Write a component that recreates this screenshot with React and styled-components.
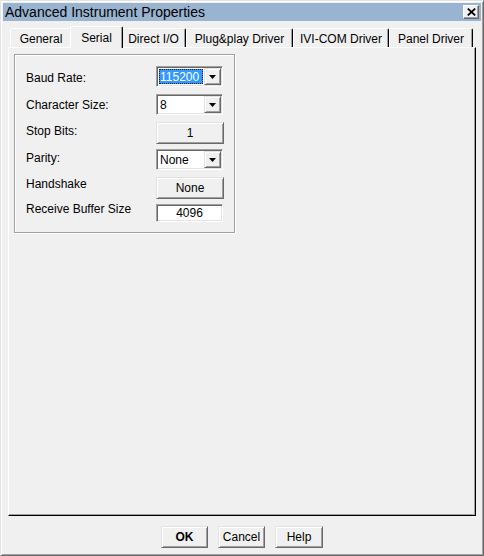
import React from 'react';
import styled, { createGlobalStyle } from 'styled-components';

const Global = createGlobalStyle`
  html, body { margin: 0; padding: 0; background: #f0f0f0; }
  body { font-family: "Liberation Sans", Arial, sans-serif; font-size: 12px; color: #000; }
  * { box-sizing: border-box; }
`;

const Window = styled.div`
  width: 484px;
  height: 556px;
  background: #f0f0f0;
  border: 1px solid;
  border-color: #e3e3e3 #696969 #696969 #e3e3e3;
  box-shadow: inset 1px 1px 0 #ffffff, inset -1px -1px 0 #a0a0a0;
  padding: 2px 2px 0 2px;
  display: flex;
  flex-direction: column;
`;

const TitleBar = styled.div`
  height: 18px;
  flex: none;
  background: #99b4d1;
  display: flex;
  align-items: center;
  justify-content: space-between;
  padding: 0 2px 0 2px;
`;

const TitleText = styled.span`
  font-size: 14px;
  line-height: 18px;
  color: #000;
`;

const CloseButton = styled.div`
  width: 16px;
  height: 14px;
  background: #f0f0f0;
  border: 1px solid;
  border-color: #ffffff #696969 #696969 #ffffff;
  box-shadow: inset -1px -1px 0 #a0a0a0;
  display: flex;
  align-items: center;
  justify-content: center;
`;

const Body = styled.div`
  padding: 0 5px;
  display: flex;
  flex-direction: column;
`;

const TabStrip = styled.div`
  margin-top: 5px;
  height: 21px;
  display: flex;
  align-items: flex-end;
  padding-left: 2px;
`;

const Tab = styled.div`
  width: ${p => p.$w}px;
  height: ${p => (p.$active ? 22 : 19)}px;
  margin: ${p => (p.$active ? '0 -2px -1px -2px' : '0')};
  z-index: ${p => (p.$active ? 1 : 0)};
  padding-top: ${p => (p.$active ? 4 : 3)}px;
  background: #f0f0f0;
  border-style: solid;
  border-width: 1px 1px 0 1px;
  border-color: #ffffff #000000 transparent #ffffff;
  border-radius: 2px 2px 0 0;
  box-shadow: inset -1px 0 0 #a0a0a0;
  text-align: center;
  font-size: 12px;
  line-height: 14px;
  white-space: nowrap;
`;

const Panel = styled.div`
  height: 469px;
  border: 1px solid;
  border-color: #ffffff #000000 #000000 #ffffff;
  box-shadow: inset -1px -1px 0 #a0a0a0;
  padding: 6px 5px;
`;

const Group = styled.div`
  width: 221px;
  height: 179px;
  border: 1px solid #a0a0a0;
  box-shadow: inset 1px 1px 0 #ffffff, 1px 1px 0 #ffffff;
  padding: 11px 0 0 11px;
  display: flex;
  flex-direction: column;
`;

const Row = styled.div`
  height: ${p => p.$h}px;
  display: grid;
  grid-template-columns: 130px auto;
  align-items: start;
`;

const Label = styled.div`
  font-size: 12px;
  line-height: 14px;
  margin-top: ${p => p.$dy}px;
  white-space: nowrap;
`;

const Combo = styled.div`
  width: 67px;
  height: 21px;
  background: #ffffff;
  border: 1px solid;
  border-color: #a0a0a0 #ffffff #ffffff #a0a0a0;
  box-shadow: inset 1px 1px 0 #696969, inset -1px -1px 0 #e3e3e3;
  padding: 1px;
  display: flex;
`;

const ComboValue = styled.div`
  flex: 1;
  display: flex;
  align-items: stretch;
  padding: 1px;
`;

const ValueText = styled.span`
  display: flex;
  align-items: center;
  font-size: 12px;
  line-height: 14px;
  padding: 0 1px;
  background: ${p => (p.$selected ? '#3399ff' : 'transparent')};
  color: ${p => (p.$selected ? '#ffffff' : '#000000')};
  outline: ${p => (p.$selected ? '1px dotted #202020' : 'none')};
  outline-offset: -1px;
  ${p => (p.$selected ? 'flex: 1;' : '')}
`;

const ArrowButton = styled.div`
  width: 17px;
  flex: none;
  background: #f0f0f0;
  border: 1px solid;
  border-color: #e3e3e3 #696969 #696969 #e3e3e3;
  box-shadow: inset 1px 1px 0 #ffffff, inset -1px -1px 0 #a0a0a0;
  display: flex;
  align-items: center;
  justify-content: center;
`;

const PushButton = styled.button`
  width: ${p => p.$w}px;
  height: 22px;
  margin-top: ${p => p.$dy || 0}px;
  padding: 0;
  font-family: "Liberation Sans", Arial, sans-serif;
  font-size: 12px;
  font-weight: ${p => (p.$bold ? 700 : 400)};
  color: #000;
  background: #f0f0f0;
  border: 1px solid;
  border-color: #e3e3e3 #696969 #696969 #e3e3e3;
  box-shadow: inset 1px 1px 0 #ffffff, inset -1px -1px 0 #a0a0a0;
`;

const Edit = styled.div`
  width: 67px;
  height: 18px;
  margin-top: ${p => p.$dy || 0}px;
  background: #ffffff;
  border: 1px solid;
  border-color: #a0a0a0 #ffffff #ffffff #a0a0a0;
  box-shadow: inset 1px 1px 0 #696969, inset -1px -1px 0 #e3e3e3;
  font-size: 12px;
  line-height: 16px;
  text-align: center;
`;

const ButtonRow = styled.div`
  margin-top: 10px;
  display: flex;
  justify-content: center;
  gap: 10px;
`;

const Arrow = () => (
  <svg width="7" height="4" viewBox="0 0 7 4">
    <polygon points="0,0 7,0 3.5,4" fill="#000" />
  </svg>
);

const CloseX = () => (
  <svg width="9" height="8" viewBox="0 0 9 8">
    <path d="M0.8 0.6 L8.2 7.4 M8.2 0.6 L0.8 7.4" stroke="#000" strokeWidth="1.8" />
  </svg>
);

const ComboBox = ({ value, selected }) => (
  <Combo>
    <ComboValue>
      <ValueText $selected={selected}>{value}</ValueText>
    </ComboValue>
    <ArrowButton>
      <Arrow />
    </ArrowButton>
  </Combo>
);

const tabs = [
  { label: 'General', w: 62 },
  { label: 'Serial', w: 53, active: true },
  { label: 'Direct I/O', w: 65 },
  { label: 'Plug&play Driver', w: 107 },
  { label: 'IVI-COM Driver', w: 96 },
  { label: 'Panel Driver', w: 84 },
];

export default function App() {
  return (
    <>
      <Global />
      <Window>
        <TitleBar>
          <TitleText>Advanced Instrument Properties</TitleText>
          <CloseButton>
            <CloseX />
          </CloseButton>
        </TitleBar>
        <Body>
          <TabStrip>
            {tabs.map(t => (
              <Tab key={t.label} $w={t.w} $active={t.active}>
                {t.label}
              </Tab>
            ))}
          </TabStrip>
          <Panel>
            <Group>
              <Row $h={28}>
                <Label $dy={5}>Baud Rate:</Label>
                <ComboBox value="115200" selected />
              </Row>
              <Row $h={28}>
                <Label $dy={4}>Character Size:</Label>
                <ComboBox value="8" />
              </Row>
              <Row $h={27}>
                <Label $dy={2}>Stop Bits:</Label>
                <PushButton $w={68}>1</PushButton>
              </Row>
              <Row $h={28}>
                <Label $dy={2}>Parity:</Label>
                <ComboBox value="None" />
              </Row>
              <Row $h={27}>
                <Label $dy={0}>Handshake</Label>
                <PushButton $w={68}>None</PushButton>
              </Row>
              <Row $h={22}>
                <Label $dy={-2}>Receive Buffer Size</Label>
                <Edit>4096</Edit>
              </Row>
            </Group>
          </Panel>
          <ButtonRow>
            <PushButton $w={47} $bold>OK</PushButton>
            <PushButton $w={47}>Cancel</PushButton>
            <PushButton $w={48}>Help</PushButton>
          </ButtonRow>
        </Body>
      </Window>
    </>
  );
}
